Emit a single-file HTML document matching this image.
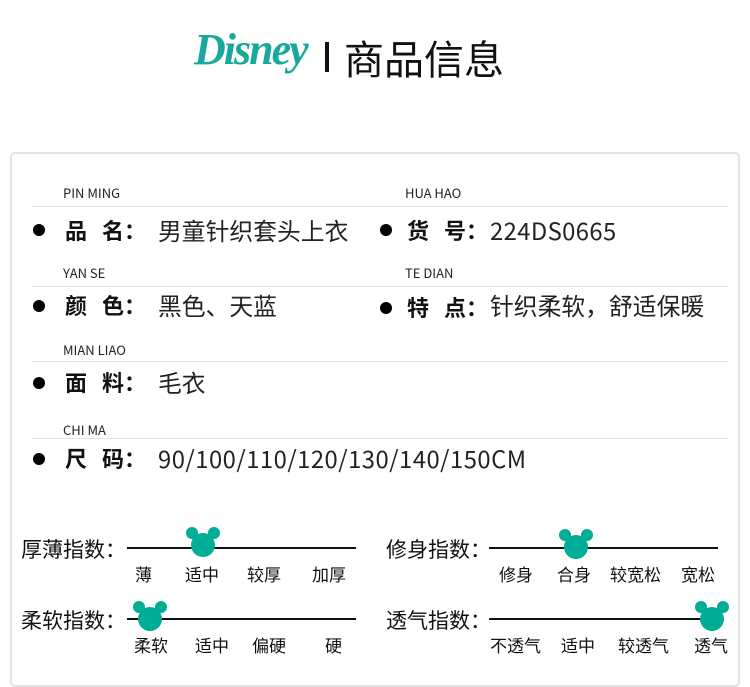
<!DOCTYPE html>
<html><head><meta charset="utf-8"><style>
body{margin:0;width:750px;height:687px;background:#fff;position:relative;overflow:hidden;font-family:"Noto Sans CJK SC","Liberation Sans",sans-serif;color:#111}
.a{position:absolute;white-space:nowrap}
.box{position:absolute;left:10px;top:152px;width:726px;height:531px;border:2px solid #e3e3e3;border-radius:5px}
.sm{font-size:13px;color:#222;line-height:16px}
.ln{position:absolute;left:32px;width:697px;height:1px;background:#e4e4e4}
.dot{position:absolute;width:12px;height:12px;border-radius:50%;background:#000}
.lb{font-size:22px;font-weight:bold;line-height:30px}
.v{font-size:23.8px;color:#222;line-height:30px}
.t{font-size:21px;line-height:28px}
.o{font-size:17px;line-height:22px}
.sl{position:absolute;height:2px;background:#111}
.m{position:absolute;width:36px;height:32px}
</style></head><body>
<div class="a" style="left:194px;top:22px;font-family:'Liberation Serif',serif;font-style:italic;font-weight:bold;font-size:44px;line-height:56px;color:#19a99a;letter-spacing:-2px">Disney</div>
<div class="a" style="left:325px;top:42px;width:4px;height:30px;background:#111"></div>
<div class="a" style="left:344px;top:31px;font-size:40px;line-height:52px">商品信息</div>
<div class="box"></div>
<div class="a sm" style="left:63px;top:185px">PIN MING</div>
<div class="a sm" style="left:405px;top:185px">HUA HAO</div>
<div class="ln" style="top:206px"></div>
<div class="dot" style="left:33px;top:224px"></div>
<div class="a lb" style="left:65px;top:215px">品&nbsp;&nbsp;&nbsp;名：</div>
<div class="a v" style="left:158px;top:215px">男童针织套头上衣</div>
<div class="dot" style="left:380px;top:224px"></div>
<div class="a lb" style="left:407px;top:215px">货&nbsp;&nbsp;&nbsp;号：</div>
<div class="a v" style="left:490px;top:215px;letter-spacing:.4px">224DS0665</div>
<div class="a sm" style="left:63px;top:265px">YAN SE</div>
<div class="a sm" style="left:405px;top:265px">TE DIAN</div>
<div class="ln" style="top:286px"></div>
<div class="dot" style="left:33px;top:300px"></div>
<div class="a lb" style="left:65px;top:290px">颜&nbsp;&nbsp;&nbsp;色：</div>
<div class="a v" style="left:158px;top:290px">黑色、天蓝</div>
<div class="dot" style="left:380px;top:302px"></div>
<div class="a lb" style="left:407px;top:292px">特&nbsp;&nbsp;&nbsp;点：</div>
<div class="a v" style="left:490px;top:290px">针织柔软，舒适保暖</div>
<div class="a sm" style="left:63px;top:342px">MIAN LIAO</div>
<div class="ln" style="top:361px"></div>
<div class="dot" style="left:33px;top:377px"></div>
<div class="a lb" style="left:65px;top:367px">面&nbsp;&nbsp;&nbsp;料：</div>
<div class="a v" style="left:158px;top:367px">毛衣</div>
<div class="a sm" style="left:63px;top:422px">CHI MA</div>
<div class="ln" style="top:438px"></div>
<div class="dot" style="left:33px;top:453px"></div>
<div class="a lb" style="left:65px;top:443px">尺&nbsp;&nbsp;&nbsp;码：</div>
<div class="a v" style="left:158px;top:443px;letter-spacing:.5px">90/100/110/120/130/140/150CM</div>

<div class="a t" style="left:21px;top:535px">厚薄指数：</div>
<div class="sl" style="left:127px;top:547px;width:229px"></div>
<svg class="m" style="left:185px;top:526px" viewBox="0 0 36 32"><circle cx="7" cy="7" r="6" fill="#00ad97"/><circle cx="29" cy="7" r="6" fill="#00ad97"/><circle cx="18" cy="19" r="12" fill="#00ad97"/></svg>
<div class="a o" style="left:135px;top:563px">薄</div>
<div class="a o" style="left:185px;top:563px">适中</div>
<div class="a o" style="left:247px;top:563px">较厚</div>
<div class="a o" style="left:312px;top:563px">加厚</div>

<div class="a t" style="left:21px;top:606px">柔软指数：</div>
<div class="sl" style="left:127px;top:618px;width:229px"></div>
<svg class="m" style="left:132px;top:600px" viewBox="0 0 36 32"><circle cx="7" cy="7" r="6" fill="#00ad97"/><circle cx="29" cy="7" r="6" fill="#00ad97"/><circle cx="18" cy="19" r="12" fill="#00ad97"/></svg>
<div class="a o" style="left:134px;top:634px">柔软</div>
<div class="a o" style="left:195px;top:634px">适中</div>
<div class="a o" style="left:252px;top:634px">偏硬</div>
<div class="a o" style="left:325px;top:634px">硬</div>

<div class="a t" style="left:386px;top:535px">修身指数：</div>
<div class="sl" style="left:489px;top:547px;width:229px"></div>
<svg class="m" style="left:558px;top:528px" viewBox="0 0 36 32"><circle cx="7" cy="7" r="6" fill="#00ad97"/><circle cx="29" cy="7" r="6" fill="#00ad97"/><circle cx="18" cy="19" r="12" fill="#00ad97"/></svg>
<div class="a o" style="left:499px;top:563px">修身</div>
<div class="a o" style="left:557px;top:563px">合身</div>
<div class="a o" style="left:610px;top:563px">较宽松</div>
<div class="a o" style="left:681px;top:563px">宽松</div>

<div class="a t" style="left:386px;top:606px">透气指数：</div>
<div class="sl" style="left:489px;top:618px;width:215px"></div>
<svg class="m" style="left:694px;top:600px" viewBox="0 0 36 32"><circle cx="7" cy="7" r="6" fill="#00ad97"/><circle cx="29" cy="7" r="6" fill="#00ad97"/><circle cx="18" cy="19" r="12" fill="#00ad97"/></svg>
<div class="a o" style="left:490px;top:634px">不透气</div>
<div class="a o" style="left:561px;top:634px">适中</div>
<div class="a o" style="left:618px;top:634px">较透气</div>
<div class="a o" style="left:694px;top:634px">透气</div>
</body></html>
